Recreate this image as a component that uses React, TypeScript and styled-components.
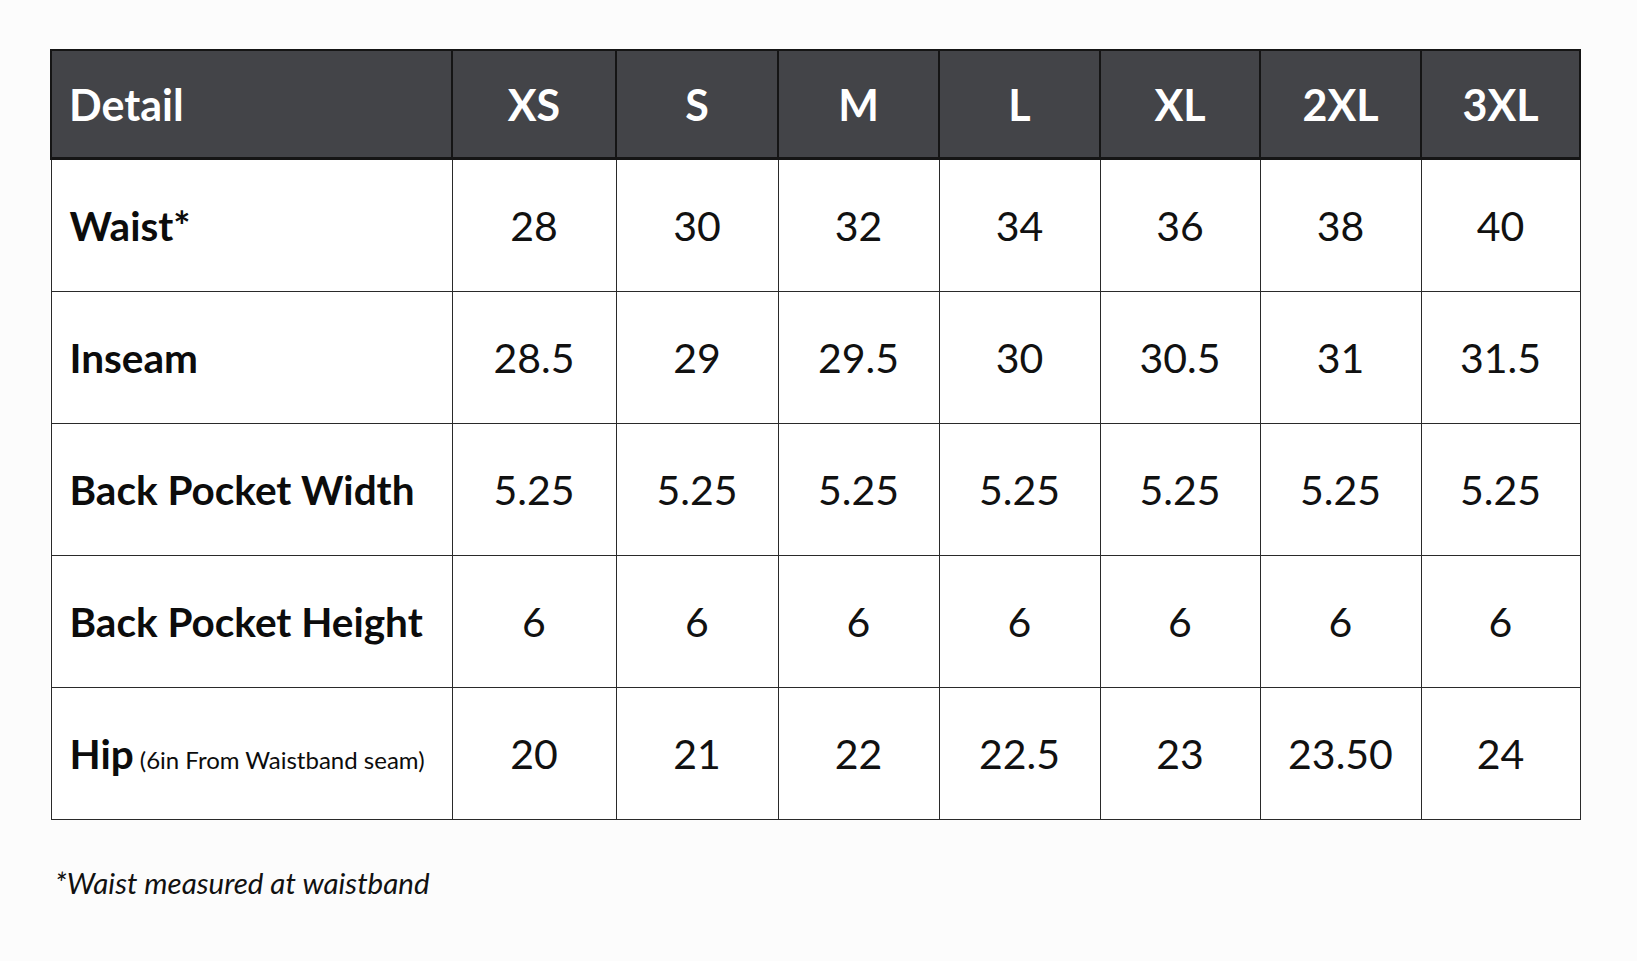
import React from "react";
import styled, { createGlobalStyle } from "styled-components";

const Global = createGlobalStyle`
  html, body { margin: 0; padding: 0; background: #fcfcfc; }
  body { font-family: Lato, "Open Sans", sans-serif; color: #111; }
`;

const Page = styled.div`
  padding: 49px 0 0 50px;
  width: 1637px;
  height: 961px;
  box-sizing: border-box;
`;

const Table = styled.table`
  border-collapse: collapse;
  table-layout: fixed;
  width: 1529px;
  background: #fff;
`;

const HeadCell = styled.th<{ $left?: boolean }>`
  height: 106px;
  padding: 0 0 0 ${(p) => (p.$left ? "17px" : "0")};
  background: #434448;
  color: #fff;
  font-weight: 700;
  font-size: 43px;
  text-align: ${(p) => (p.$left ? "left" : "center")};
  border: 2px solid #151515;
  border-bottom-width: 3px;
`;

const Label = styled.td`
  height: 129px;
  padding: 0 0 0 18px;
  font-weight: 700;
  font-size: 40.5px;
  color: #0c0c0c;
  border: 1.5px solid #2a2a2a;
  white-space: nowrap;
`;

const Note = styled.span`
  font-weight: 400;
  font-size: 24px;
  margin-left: 6px;
`;

const Value = styled.td`
  height: 129px;
  text-align: center;
  font-size: 41px;
  font-weight: 400;
  color: #111;
  border: 1.5px solid #2a2a2a;
`;

const Footnote = styled.p`
  margin: 45px 0 0 5px;
  font-style: italic;
  font-size: 29.5px;
  color: #111;
`;

const sizes = ["XS", "S", "M", "L", "XL", "2XL", "3XL"];
const widths = [401, 164, 162, 161, 161, 160, 161, 159];

const rows: { label: string; note?: string; values: string[] }[] = [
  { label: "Waist*", values: ["28", "30", "32", "34", "36", "38", "40"] },
  { label: "Inseam", values: ["28.5", "29", "29.5", "30", "30.5", "31", "31.5"] },
  { label: "Back Pocket Width", values: Array(7).fill("5.25") },
  { label: "Back Pocket Height", values: Array(7).fill("6") },
  {
    label: "Hip",
    note: "(6in From Waistband seam)",
    values: ["20", "21", "22", "22.5", "23", "23.50", "24"],
  },
];

export default function App() {
  return (
    <>
      <Global />
      <Page>
        <Table>
          <colgroup>
            {widths.map((w, i) => (
              <col key={i} style={{ width: w }} />
            ))}
          </colgroup>
          <thead>
            <tr>
              <HeadCell $left>Detail</HeadCell>
              {sizes.map((s) => (
                <HeadCell key={s}>{s}</HeadCell>
              ))}
            </tr>
          </thead>
          <tbody>
            {rows.map((r) => (
              <tr key={r.label}>
                <Label>
                  {r.label}
                  {r.note && <Note>{r.note}</Note>}
                </Label>
                {r.values.map((v, i) => (
                  <Value key={i}>{v}</Value>
                ))}
              </tr>
            ))}
          </tbody>
        </Table>
        <Footnote>*Waist measured at waistband</Footnote>
      </Page>
    </>
  );
}
